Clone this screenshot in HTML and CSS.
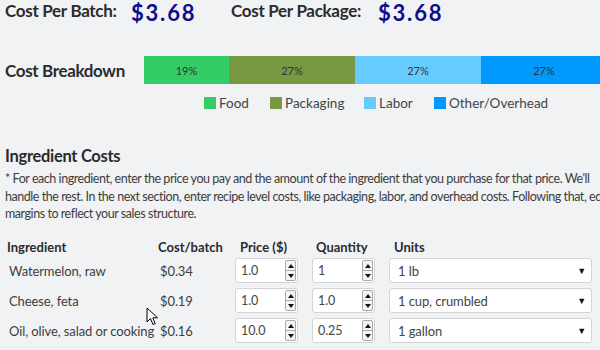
FILE: index.html
```html
<!DOCTYPE html>
<html>
<head>
<meta charset="utf-8">
<link rel="stylesheet" href="styles.css">
</head>
<body>
<div class="page">
  <div class="summary">
    <span class="sum-label">Cost Per Batch:</span>
    <span class="sum-value">$3.68</span>
    <span class="sum-label second">Cost Per Package:</span>
    <span class="sum-value">$3.68</span>
  </div>

  <div class="breakdown">
    <h2 class="bd-label">Cost Breakdown</h2>
    <div class="bar">
      <div class="seg food" style="width:85px">19%</div>
      <div class="seg pack" style="width:126px">27%</div>
      <div class="seg labor" style="width:126px">27%</div>
      <div class="seg other" style="width:126px">27%</div>
    </div>
  </div>
  <div class="legend">
    <span class="lg"><i class="sw food"></i>Food</span>
    <span class="lg"><i class="sw pack"></i>Packaging</span>
    <span class="lg"><i class="sw labor"></i>Labor</span>
    <span class="lg"><i class="sw other"></i>Other/Overhead</span>
  </div>

  <h2 class="section-title">Ingredient Costs</h2>
  <p class="note">* For each ingredient, enter the price you pay and the amount of the ingredient that you purchase for that price. We'll<br>handle the rest. In the next section, enter recipe level costs, like packaging, labor, and overhead costs. Following that, edit<br>margins to reflect your sales structure.</p>

  <div class="table">
    <div class="th c1">Ingredient</div>
    <div class="th c2">Cost/batch</div>
    <div class="th c3">Price ($)</div>
    <div class="th c4">Quantity</div>
    <div class="th c5">Units</div>

    <div class="td name">Watermelon, raw</div>
    <div class="td cost">$0.34</div>
    <div class="td"><div class="num"><span class="val">1.0</span><span class="spin"><b class="up"></b><b class="dn"></b></span></div></div>
    <div class="td"><div class="num"><span class="val">1</span><span class="spin"><b class="up"></b><b class="dn"></b></span></div></div>
    <div class="td"><div class="sel"><span>1 lb</span><span class="arrow">▼</span></div></div>

    <div class="td name">Cheese, feta</div>
    <div class="td cost">$0.19</div>
    <div class="td"><div class="num"><span class="val">1.0</span><span class="spin"><b class="up"></b><b class="dn"></b></span></div></div>
    <div class="td"><div class="num"><span class="val">1.0</span><span class="spin"><b class="up"></b><b class="dn"></b></span></div></div>
    <div class="td"><div class="sel"><span>1 cup, crumbled</span><span class="arrow">▼</span></div></div>

    <div class="td name">Oil, olive, salad or cooking</div>
    <div class="td cost">$0.16</div>
    <div class="td"><div class="num"><span class="val">10.0</span><span class="spin"><b class="up"></b><b class="dn"></b></span></div></div>
    <div class="td"><div class="num"><span class="val">0.25</span><span class="spin"><b class="up"></b><b class="dn"></b></span></div></div>
    <div class="td"><div class="sel"><span>1 gallon</span><span class="arrow">▼</span></div></div>
  </div>
</div>
<svg class="cursor" width="13" height="20" viewBox="0 0 13 20"><path d="M1 1 L1 15 L4.5 11.5 L7 17.5 L9.2 16.6 L6.8 10.8 L11.5 10.8 Z" fill="#fff" stroke="#000" stroke-width="1"/></svg>
</body>
</html>
```

FILE: styles.css
```css
html, body {
  margin: 0;
  padding: 0;
}
body {
  background: #f1f2f4;
  font-family: Lato, "Noto Sans", sans-serif;
  color: #333;
  width: 600px;
  height: 350px;
  overflow: hidden;
  position: relative;
}
.page {
  width: 640px;
  padding-left: 5px;
}
.summary {
  display: flex;
  align-items: flex-start;
  height: 26px;
}
.sum-label {
  font-weight: 700;
  font-size: 17px;
  line-height: 20px;
  letter-spacing: -0.3px;
  padding-top: 1px;
  color: #2b2b2b;
  width: 126px;
}
.sum-label.second {
  width: 147px;
}
.sum-value {
  font-weight: 700;
  font-size: 22px;
  line-height: 26px;
  letter-spacing: 1.8px;
  color: #0d0d8c;
  width: 100px;
}
.breakdown {
  display: flex;
  align-items: center;
  margin-top: 30px;
}
.bd-label {
  margin: 0;
  width: 139px;
  font-size: 17px;
  letter-spacing: -0.35px;
  font-weight: 700;
  color: #2b2b2b;
}
.bar {
  display: flex;
  height: 28px;
}
.seg {
  display: flex;
  align-items: center;
  justify-content: center;
  font-size: 11px;
  color: #333;
}
.food { background: #33cc66; }
.pack { background: #779944; }
.labor { background: #66ccff; }
.other { background: #0099ff; }
.legend {
  display: grid;
  grid-template-columns: 66px 94px 70px auto;
  margin-top: 11px;
  padding-left: 199px;
  font-size: 13.5px;
  color: #444;
  height: 14px;
  align-items: center;
}
.lg {
  display: flex;
  align-items: center;
}
.sw {
  display: inline-block;
  width: 12px;
  height: 12px;
  margin-right: 3px;
}
.section-title {
  margin: 36px 0 0;
  font-size: 16.5px;
  letter-spacing: -0.3px;
  font-weight: 700;
  color: #2b2b2b;
  line-height: 22px;
}
.note {
  margin: 3px 0 0;
  font-size: 12.5px;
  letter-spacing: -0.45px;
  line-height: 17.5px;
  color: #3d3d3d;
  white-space: nowrap;
}
.table {
  display: grid;
  grid-template-columns: 150px 80px 77px 77px 203px;
  grid-template-rows: 18px 30px 30px 30px;
  margin-top: 15px;
}
.th {
  font-size: 13px;
  font-weight: 700;
  line-height: 18px;
  color: #2b2b2b;
}
.c1 { padding-left: 2px; }
.c2 { padding-left: 3px; }
.c3 { padding-left: 5px; }
.c4 { padding-left: 4px; }
.c5 { padding-left: 5px; }
.td {
  display: flex;
  align-items: center;
  font-size: 13px;
  letter-spacing: -0.1px;
  color: #3d3d3d;
}
.name { padding-left: 4px; white-space: nowrap; }
.cost { padding-left: 5px; }
.num {
  width: 63px;
  height: 25px;
  box-sizing: border-box;
  border: 1px solid #d4d4d4;
  border-radius: 3px;
  background: #fff;
  display: flex;
  align-items: center;
  justify-content: space-between;
  padding: 0 1px 0 5px;
  font-size: 12.5px;
  color: #444;
}
.spin {
  width: 11px;
  height: 21px;
  box-sizing: border-box;
  border: 1px solid #a9a9a9;
  border-radius: 2px;
  background: #f4f4f4;
  display: flex;
  flex-direction: column;
}
.spin b {
  flex: 1;
  display: flex;
  align-items: center;
  justify-content: center;
}
.spin .up { border-bottom: 1px solid #a9a9a9; }
.spin .up::before {
  content: "";
  border-left: 3.5px solid transparent;
  border-right: 3.5px solid transparent;
  border-bottom: 4px solid #111;
}
.spin .dn::before {
  content: "";
  border-left: 3.5px solid transparent;
  border-right: 3.5px solid transparent;
  border-top: 4px solid #111;
}
.sel {
  width: 203px;
  height: 25px;
  box-sizing: border-box;
  border: 1px solid #d4d4d4;
  border-radius: 3px;
  background: #fff;
  display: flex;
  align-items: center;
  justify-content: space-between;
  padding: 0 5px 0 8px;
  font-size: 13px;
  color: #444;
}
.arrow {
  font-size: 9px;
  color: #111;
}
.cursor {
  position: absolute;
  left: 146px;
  top: 307px;
}
```
